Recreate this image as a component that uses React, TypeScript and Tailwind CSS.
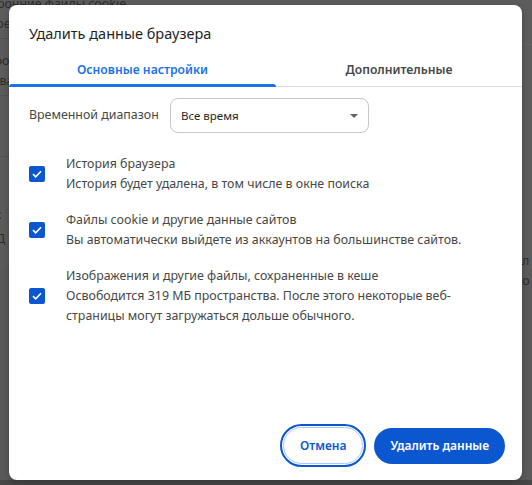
import { useState } from "react";

type Item = { title: string; desc: string };

const items: Item[] = [
  { title: "История браузера", desc: "История будет удалена, в том числе в окне поиска" },
  {
    title: "Файлы cookie и другие данные сайтов",
    desc: "Вы автоматически выйдете из аккаунтов на большинстве сайтов.",
  },
  {
    title: "Изображения и другие файлы, сохраненные в кеше",
    desc: "Освободится 319 МБ пространства. После этого некоторые веб-страницы могут загружаться дольше обычного.",
  },
];

function CheckBox({ checked, onChange }: { checked: boolean; onChange: () => void }) {
  return (
    <button
      onClick={onChange}
      className={`w-[16px] h-[16px] rounded-[2px] flex items-center justify-center shrink-0 ${
        checked ? "bg-[#0b57d0]" : "border-2 border-[#444746]"
      }`}>
      {checked && (
        <svg width="10" height="8" viewBox="0 0 10 8" fill="none">
          <path d="M1 4.2L3.7 6.8L9 1.2" stroke="white" strokeWidth="1.6" />
        </svg>
      )}
    </button>
  );
}

export default function App() {
  const [tab, setTab] = useState(0);
  const [checked, setChecked] = useState([true, true, true]);

  return (
    <div
      className="relative w-[532px] h-[485px] overflow-hidden flex flex-col bg-[#5a5a5a] text-[12.4px]"
      style={{ fontFamily: '"Noto Sans", "Open Sans", sans-serif' }}>
      {/* dimmed settings page behind the dialog */}
      <div className="flex justify-between bg-[#5c5c5c] h-[268px] text-[#2c2c2c] leading-[20px]">
        <div className="-ml-[24px] w-[200px]">
          <div className="-mt-[6px]">Сторонние файлы cookie</div>
          <div>Разрешить</div>
          <div className="border-t border-[#515151] mt-[4px] pt-[12px]">Инфо</div>
          <div>Права</div>
          <div className="border-t border-[#515151] mt-[4px] pt-[12px]">Хоо</div>
          <div>Хоо</div>
          <div className="border-t border-[#515151] mt-[8px] pt-[8px]">Ист</div>
          <div>Пре</div>
          <div>Мих</div>
          <div className="pl-[20px] pt-[4px]">Д</div>
        </div>
        <div className="w-[12px] pt-[206px] border-t border-[#626262] mt-[44px]">
          <div className="pl-[2px]">л</div>
          <div className="-ml-[4px]">ко</div>
        </div>
      </div>
      <div className="flex-1" />
      <div className="h-[5px] bg-[#474747]" />

      <div className="absolute left-[9px] top-[5px] w-[513px] h-[475px] bg-white rounded-[8px] flex flex-col shadow-[0_2px_6px_rgba(0,0,0,0.25)]">
        <h1 className="pl-[20px] pt-[17px] text-[14.5px] leading-[22px] text-[#1f1f1f]">
          Удалить данные браузера
        </h1>

        <div className="flex mt-[10px] border-b border-[#dadce0]">
          {["Основные настройки", "Дополнительные"].map((label, i) => (
            <button
              key={label}
              onClick={() => setTab(i)}
              className={`relative h-[32px] text-[12.2px] font-semibold ${
                i === 0 ? "w-[267px]" : "flex-1"
              } ${tab === i ? "text-[#1a73e8]" : "text-[#474747]"}`}>
              {label}
              {tab === i && (
                <span className="absolute left-0 right-0 -bottom-px h-[3px] rounded-t-[3px] bg-[#1a73e8]" />
              )}
            </button>
          ))}
        </div>

        <div className="flex items-center pl-[20px] mt-[11px]">
          <span className="text-[#474747] w-[141px]">Временной диапазон</span>
          <div className="w-[199px] h-[35px] border border-[#c7c7c7] rounded-[8px] flex items-center justify-between pl-[10px] pr-[10px] text-[#1f1f1f] text-[11.5px]">
            <span>Все время</span>
            <svg width="8" height="4" viewBox="0 0 8 4">
              <path d="M0 0H8L4 4Z" fill="#5f6368" />
            </svg>
          </div>
        </div>

        <div className="flex flex-col gap-[16px] mt-[21px] pl-[20px]">
          {items.map((it, i) => (
            <div key={it.title} className="flex items-center">
              <div className="w-[37px] shrink-0">
                <CheckBox
                  checked={checked[i]}
                  onChange={() => setChecked(checked.map((c, j) => (j === i ? !c : c)))}
                />
              </div>
              <div className="leading-[20px] text-[#474747] w-[400px]">
                <div>{it.title}</div>
                <div>{it.desc}</div>
              </div>
            </div>
          ))}
        </div>

        <div className="mt-auto flex justify-end items-center gap-[8px] pr-[17px] pb-[13px] text-[12px]">
          <div className="rounded-full border-2 border-[#0b57d0] p-px">
            <button className="h-[37px] px-[16px] rounded-full border border-[#a8c7fa] text-[#0b57d0] font-semibold">
              Отмена
            </button>
          </div>
          <button className="h-[36px] px-[16px] rounded-full bg-[#0b57d0] text-white font-semibold">
            Удалить данные
          </button>
        </div>
      </div>
    </div>
  );
}
